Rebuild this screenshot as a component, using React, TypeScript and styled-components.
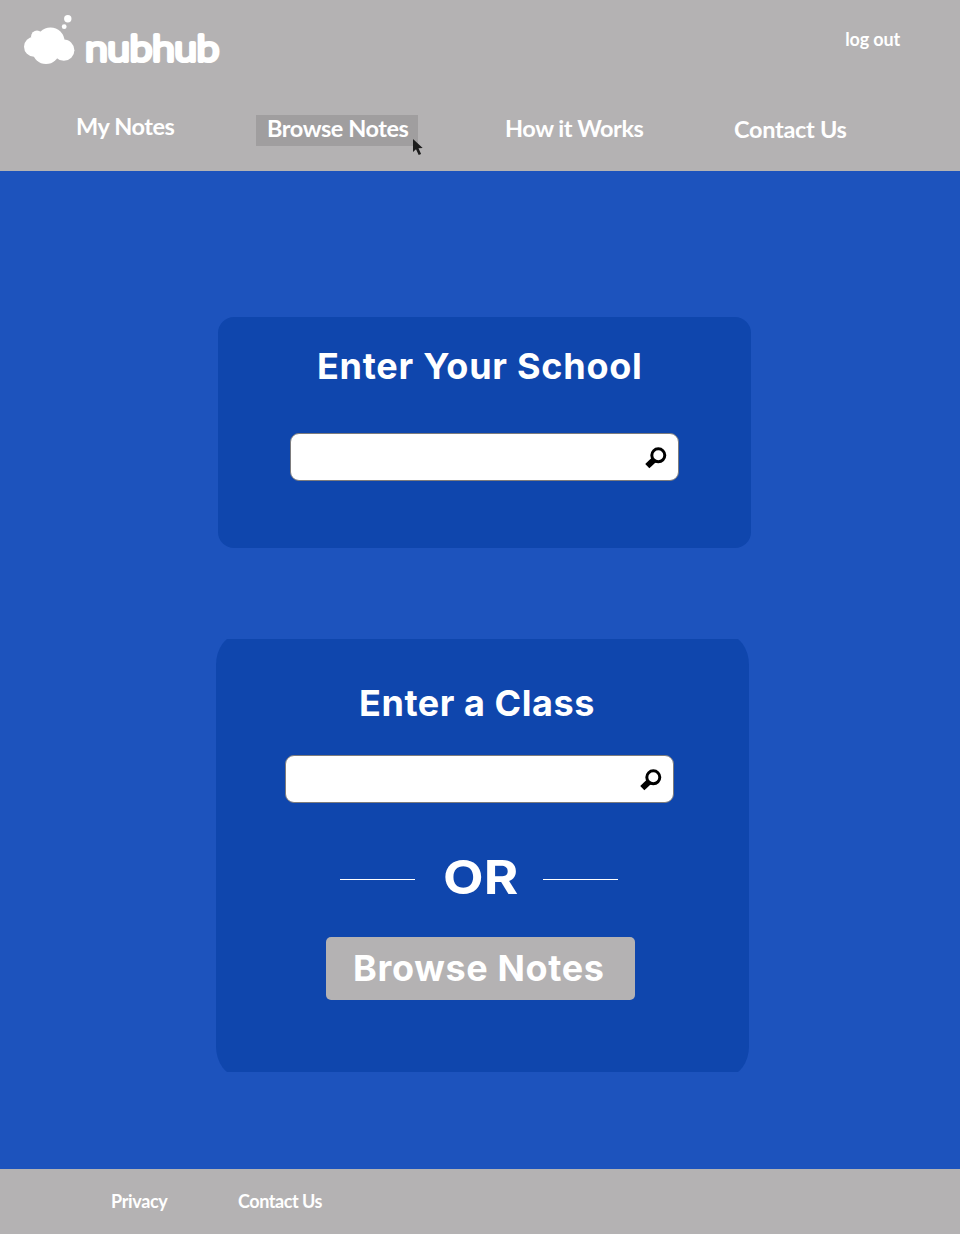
import React from "react";
import styled, { createGlobalStyle } from "styled-components";

const GlobalStyle = createGlobalStyle`
  *, *::before, *::after { box-sizing: border-box; }
  body { margin: 0; background: #1d53bd; }
`;

const Page = styled.div`
  display: flex;
  flex-direction: column;
  width: 960px;
  height: 1234px;
  background: #1d53bd;
  color: #fff;
  font-family: Lato, "Liberation Sans", sans-serif;
  overflow: hidden;
`;

const Header = styled.header`
  height: 171px;
  background: #b4b2b3;
`;

const TopBar = styled.div`
  display: flex;
  justify-content: space-between;
  align-items: flex-start;
  height: 112px;
  padding: 10px 60px 0 20px;
`;

const TextLink = styled.a<{ $size: number; $spacing?: number }>`
  color: #fff;
  font-size: ${(p) => p.$size}px;
  font-weight: 700;
  line-height: 30px;
  letter-spacing: ${(p) => p.$spacing ?? 0}px;
  white-space: nowrap;
  text-decoration: none;
`;

const LogOut = styled(TextLink)`
  margin-top: 14px;
`;

const Nav = styled.nav`
  display: flex;
  align-items: flex-start;
  padding-left: 65px;
`;

const NavItem = styled.div<{ $width: number; $drop: number; $gap: number; $active?: boolean }>`
  position: relative;
  flex: none;
  display: flex;
  width: ${(p) => p.$width}px;
  height: 31px;
  margin: ${(p) => p.$drop}px ${(p) => p.$gap}px 0 0;
  padding-left: 11px;
  background: ${(p) => (p.$active ? "#a09e9f" : "transparent")};

  & > a {
    line-height: ${(p) => (p.$active ? 26 : 30)}px;
  }
`;

const Pointer = styled.svg`
  position: absolute;
  left: 156px;
  top: 23px;
`;

const Main = styled.main`
  display: flex;
  flex-direction: column;
  height: 998px;
  padding-top: 146px;
`;

const Card = styled.section<{ $tall?: boolean }>`
  position: relative;
  flex: none;
  display: flex;
  flex-direction: column;
  align-items: flex-start;
  width: 533px;
  height: ${(p) => (p.$tall ? 433 : 231)}px;
  margin-left: ${(p) => (p.$tall ? 216 : 218)}px;
  margin-top: ${(p) => (p.$tall ? 91 : 0)}px;
  overflow: hidden;
  isolation: isolate;

  &::before {
    content: "";
    position: absolute;
    z-index: -1;
    inset: ${(p) => (p.$tall ? "-4px 0" : "0")};
    border-radius: ${(p) => (p.$tall ? "22px / 30px" : "16px")};
    background: #0f46ad;
  }
`;

const Title = styled.h2<{ $top: number; $left: number; $spacing: number }>`
  margin: ${(p) => p.$top}px 0 0 ${(p) => p.$left}px;
  font-family: Inter, "Liberation Sans", sans-serif;
  font-size: 36px;
  font-weight: 700;
  line-height: 44px;
  letter-spacing: ${(p) => p.$spacing}px;
  white-space: nowrap;
`;

const SearchBox = styled.div<{ $top: number; $left: number }>`
  display: flex;
  align-items: center;
  width: 389px;
  height: 48px;
  margin: ${(p) => p.$top}px 0 0 ${(p) => p.$left}px;
  padding: 1px 11px 0 0;
  border: 1px solid #7d7c7d;
  border-radius: 9px;
  background: #fff;
`;

const SearchInput = styled.input`
  flex: 1;
  min-width: 0;
  height: 100%;
  padding: 0 12px;
  border: 0;
  outline: 0;
  background: transparent;
  font: 18px Lato, sans-serif;
`;

const Divider = styled.div`
  display: flex;
  align-items: center;
  width: 278px;
  height: 60px;
  margin: 46px 0 0 124px;
`;

const Rule = styled.span`
  width: 75px;
  height: 1px;
  margin-top: 1px;
  background: #fff;
`;

const OrText = styled.span`
  flex: 1;
  text-align: center;
  font: 700 47px/60px Inter, "Liberation Sans", sans-serif;
  padding: 0 0 4px 3px;
  transform: scaleX(1.12);
`;

const BrowseButton = styled.button`
  width: 309px;
  height: 63px;
  margin: 28px 0 0 110px;
  padding: 0 0 0 27px;
  border: 0;
  border-radius: 5px;
  background: #b4b2b3;
  color: #fff;
  font: 700 36px/63px Inter, "Liberation Sans", sans-serif;
  letter-spacing: 0.65px;
  text-align: left;
  white-space: nowrap;
`;

const Footer = styled.footer`
  display: flex;
  gap: 70px;
  height: 65px;
  padding: 17px 0 0 111px;
  background: #b4b2b3;
`;

const FooterItem = styled.div<{ $width?: number }>`
  display: flex;
  width: ${(p) => (p.$width ? `${p.$width}px` : "auto")};
`;

const Logo = () => (
  <svg width="204" height="60" viewBox="20 10 204 60" fill="#fff" aria-label="nubhub">
    <circle cx="67.8" cy="18.7" r="3.7" />
    <circle cx="64.2" cy="26.7" r="2.4" />
    <circle cx="50.5" cy="41.5" r="14" />
    <circle cx="37" cy="36.3" r="5.9" />
    <circle cx="34" cy="46.7" r="10" />
    <circle cx="63.8" cy="50.2" r="10.6" />
    <ellipse cx="46" cy="52" rx="13" ry="12" />
    <text
      x="85.2"
      y="60.8"
      fontFamily="Lato, sans-serif"
      fontSize="35"
      fontWeight="300"
      textLength="134"
      lengthAdjust="spacingAndGlyphs"
      stroke="#fff"
      strokeWidth="4.2"
      strokeLinejoin="round"
    >
      nubhub
    </text>
  </svg>
);

const SearchIcon = () => (
  <svg width="22" height="22" viewBox="0 0 22 22" fill="none" stroke="#000">
    <circle cx="13.3" cy="8.3" r="6.5" strokeWidth="3" />
    <path d="M9.3 12.5 2.3 19.2" strokeWidth="6" />
  </svg>
);

const Search = ({ top, left, label }: { top: number; left: number; label: string }) => (
  <SearchBox $top={top} $left={left}>
    <SearchInput aria-label={label} />
    <SearchIcon />
  </SearchBox>
);

export default function App() {
  return (
    <Page>
      <GlobalStyle />
      <Header>
        <TopBar>
          <Logo />
          <LogOut $size={18} $spacing={-0.15}>log out</LogOut>
        </TopBar>
        <Nav>
          <NavItem $width={140} $drop={-1} $gap={51}>
            <TextLink $size={23.5} $spacing={-0.45}>My Notes</TextLink>
          </NavItem>
          <NavItem $width={162} $drop={3} $gap={76} $active>
            <TextLink $size={23.5} $spacing={-0.45}>Browse Notes</TextLink>
            <Pointer width="12" height="20" viewBox="0 0 12 20">
              <path d="M1 1v13l3-2.7 2.7 5.7 2.4-1.1-2.6-5.6 4.2-.4Z" fill="#1d1d1d" />
            </Pointer>
          </NavItem>
          <NavItem $width={160} $drop={1} $gap={69}>
            <TextLink $size={23.5} $spacing={-0.45}>How it Works</TextLink>
          </NavItem>
          <NavItem $width={140} $drop={2} $gap={0}>
            <TextLink $size={23.5} $spacing={-0.3}>Contact Us</TextLink>
          </NavItem>
        </Nav>
      </Header>
      <Main>
        <Card>
          <Title $top={27} $left={99} $spacing={0.75}>Enter Your School</Title>
          <Search top={45} left={72} label="School" />
        </Card>
        <Card $tall>
          <Title $top={42} $left={143} $spacing={0.55}>Enter a Class</Title>
          <Search top={30} left={69} label="Class" />
          <Divider>
            <Rule />
            <OrText>OR</OrText>
            <Rule />
          </Divider>
          <BrowseButton>Browse Notes</BrowseButton>
        </Card>
      </Main>
      <Footer>
        <FooterItem $width={57}>
          <TextLink $size={18} $spacing={-0.35}>Privacy</TextLink>
        </FooterItem>
        <FooterItem>
          <TextLink $size={18} $spacing={-0.45}>Contact Us</TextLink>
        </FooterItem>
      </Footer>
    </Page>
  );
}
